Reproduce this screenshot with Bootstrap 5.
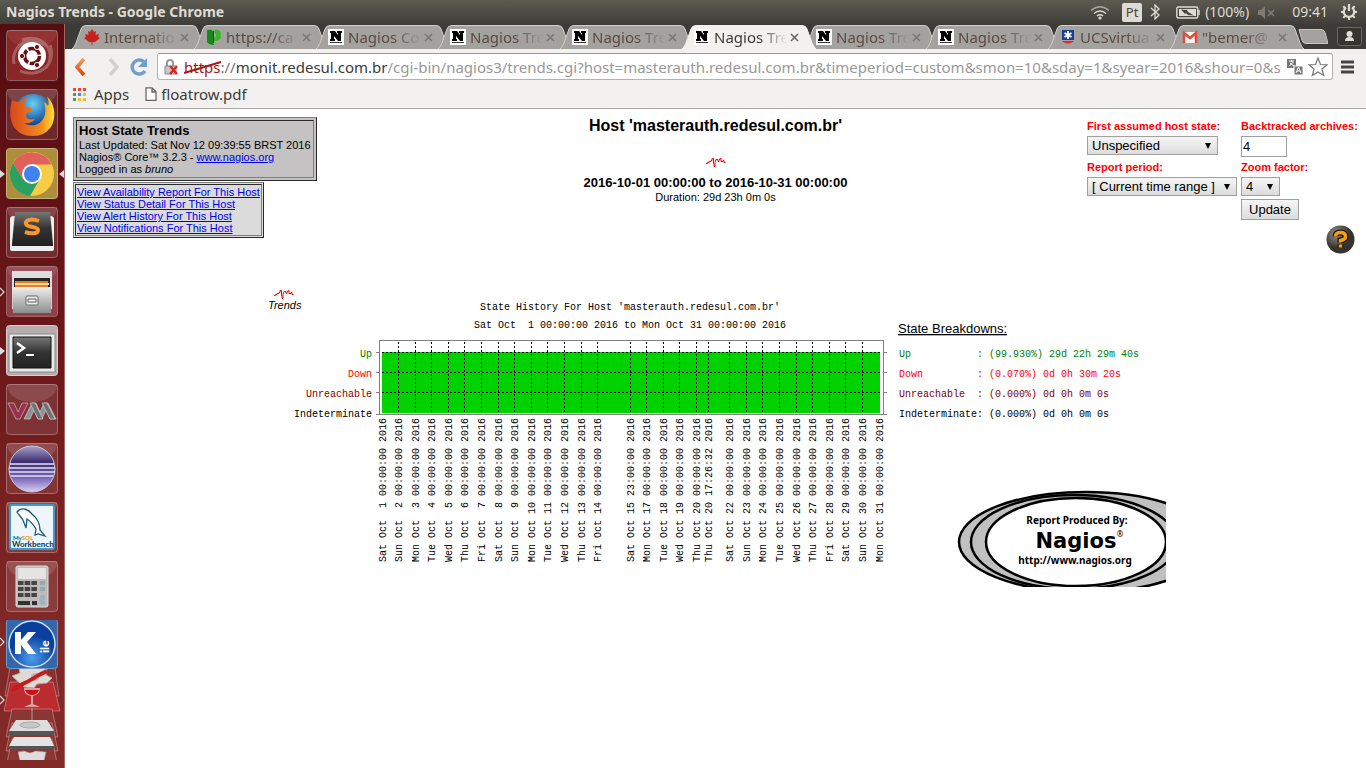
<!DOCTYPE html>
<html lang="en">
<head>
<meta charset="utf-8">
<meta name="viewport" content="width=device-width, initial-scale=1">
<title>Nagios Trends</title>
<link href="https://cdn.jsdelivr.net/npm/bootstrap@5.3.0/dist/css/bootstrap.min.css" rel="stylesheet">
<style>
  body { background: #fff; color: #000; font-family: "Noto Sans", sans-serif; font-size: 15px; line-height: 20px; }
  svg { display: block; flex: none; }
  .panel-bar { height: 24px; background: linear-gradient(#5c5a50, #3f3e39); color: #dfdbd2; font-size: 14px; }
  .panel-bar h1 { font-size: 14px; line-height: 24px; font-weight: 700; margin: 0 auto 0 6px; }
  .lang-box { background: #dfdbd2; color: #45443f; border-radius: 2px; font-size: 13px; line-height: 19px; width: 20px; text-align: center; }
  .launcher { width: 65px; padding-top: 6px; gap: 8px; background: linear-gradient(90deg, transparent 64px, #a5685f 64px), linear-gradient(#560d12, #6c171a 45%, #7f2826 80%, #822a28); overflow: hidden; flex: none; }
  .launcher a { display: block; }
  .tabstrip { height: 25px; background: #3c3b37; padding-left: 11px; }
  .tab-item { position: relative; flex: 0 1 122px; min-width: 0; height: 24px; margin-top: 1px; color: #5b4a42; padding-left: 8px; }
  .tab-item > .tab-shape { position: absolute; left: -5px; top: 0; width: calc(100% + 14px); height: 24px; fill: #a3a29f; stroke: #d0cfcc; }
  .tab-item.active { color: #3c3b37; z-index: 2; }
  .tab-item.active > .tab-shape { fill: #f2f1f0; stroke: #f2f1f0; }
  .tab-item > .tab-fav { position: relative; width: 16px; height: 16px; }
  .tab-item > a { position: relative; flex: 0 0 76px; margin-left: 4px; color: inherit; text-decoration: none; white-space: nowrap; -webkit-mask-image: linear-gradient(90deg, #000 60%, transparent 96%); mask-image: linear-gradient(90deg, #000 60%, transparent 96%); }
  .tab-close { position: relative; border: 0; background: none; padding: 0; color: #777; }
  .tab-item.active .tab-close { color: #666; }
  .toolbar { background: #f2f1f0; border-bottom: 1px solid #a9a8a7; height: 60px; color: #3c3b37; }
  .tool-btn { border: 0; background: none; padding: 0; }
  .omnibox { height: 27px; background: #fff; border: 1px solid #b3b2b0; border-top-color: #999; border-radius: 3px; min-width: 0; white-space: nowrap; }
  .omnibox input { border: 0; outline: 0; padding: 0; min-width: 0; color: #999; background: none; }
  .scheme { position: relative; color: #a4161a; }
  .scheme svg { position: absolute; left: 0; top: 3px; }
  .report { font-family: "Liberation Sans", Arial, sans-serif; font-size: 11px; line-height: 12px; padding: 8px; }
  .report a { color: #00e; text-decoration: underline; }
  .side-col { flex: 1 1 0; }
  .ridge-box { border: 1px solid; border-color: #808080 #2b2b2b #2b2b2b #808080; background: #c4c2c2; padding: 2px; }
  .ridge-box > div { border: 1px solid; border-color: #2b2b2b #808080 #808080 #2b2b2b; padding: 2px; }
  .box-title { font-size: 13px; line-height: 16px; font-weight: 700; margin: 0; }
  .link-box { background: #dbdbdb; padding: 1px; margin-top: 1px; }
  .link-box > div { padding: 1px; }
  .host-title { font-size: 16px; line-height: 18px; font-weight: 700; margin: 0; }
  .pulse-row { padding: 22px 0 8px; }
  .range-line { font-size: 13px; line-height: 16px; font-weight: 700; }
  .opt-grid { display: grid; grid-template-columns: 150px 117px; gap: 3px 4px; align-items: start; justify-items: start; padding-top: 2px; }
  .opt-grid label { color: #f00; font-weight: 700; line-height: 14px; }
  .opt-grid select, .opt-grid input, .opt-grid button { font-family: inherit; font-size: 13px; color: #000; border: 1px solid #a0a0a0; border-radius: 0; line-height: 15px; }
  .opt-grid select { appearance: none; height: 19px; padding: 1px 4px; background: url("data:image/svg+xml,%3Csvg xmlns='http://www.w3.org/2000/svg' width='8' height='7'%3E%3Cpath d='M1 0h6L4 6z'/%3E%3C/svg%3E") right 5px top 6px no-repeat, linear-gradient(#f6f6f6, #dcdcdc); }
  .opt-grid input { width: 46px; height: 21px; padding: 2px 1px; }
  .opt-grid button { height: 21px; padding: 1px 7px; background: linear-gradient(#f6f6f6, #dcdcdc); }
  .w-state { width: 131px; } .w-period { width: 150px; } .w-zoom { width: 39px; }
  .help-link { margin: 5px 3px 0 0; }
  .chart-wrap { padding: 33px 0 0 1px; }
  .plot-text { font-family: "Liberation Mono", monospace; font-size: 10px; }
</style>
</head>
<body class="d-flex flex-column min-vh-100">

<svg width="0" height="0" class="position-absolute" aria-hidden="true">
  <defs>
    <symbol id="pulse" viewBox="0 0 20 10"><path d="M0 6.500h1.500v-1H3v-1h2v-1h1v-2h1.500v5H8v3h1v-4l1-3h2v2h1v-1l1-2h1v3h2v-1h1v2h1.500" fill="none" stroke="#f00"/></symbol>
    <symbol id="fav-n" viewBox="0 0 16 16"><path fill="#fff" d="M0 0h16v16H0z"/><path d="M2 12V10h1V4H2V2h5l3 4V4H9V2h5v2h-1v8h-3L6 7v3h1v2z"/><path d="M2 13.500h12" stroke="#333"/></symbol>
    <symbol id="cross" viewBox="0 0 9 9"><path d="m1 1 7 7m0-7L1 8" stroke="currentColor" stroke-width="1.600"/></symbol>
    <symbol id="tile" viewBox="0 0 64 51"><rect x="6.500" y=".5" width="51" height="50" rx="3" fill="#fff" fill-opacity=".1" stroke="#fff" stroke-opacity=".3"/><ellipse cx="32" cy="2" rx="25" ry="16" fill="#fff" opacity=".13"/></symbol>
    <symbol id="run" viewBox="0 0 64 51"><path d="m0 22 5 4-5 4z" fill="#ddd"/></symbol>
    <symbol id="run-open" viewBox="0 0 64 51"><path d="m0 22 4 4-4 4" fill="none" stroke="#ddd" stroke-width="1.200"/></symbol>
    <linearGradient id="gSteel" x2="0" y2="1"><stop stop-color="#eee"/><stop offset="1" stop-color="#8e8e8e"/></linearGradient>
    <linearGradient id="gDark" x2="0" y2="1"><stop stop-color="#777"/><stop offset=".5" stop-color="#333"/><stop offset="1" stop-color="#222"/></linearGradient>
    <radialGradient id="gSea" cx=".5" cy=".25"><stop stop-color="#6cd0f2"/><stop offset="1" stop-color="#124a97"/></radialGradient>
    <linearGradient id="gFox" x2="1"><stop stop-color="#d8481c"/><stop offset=".7" stop-color="#f28a1e"/><stop offset="1" stop-color="#ffe23a"/></linearGradient>
    <linearGradient id="gEcl" x2="0" y2="1"><stop stop-color="#a9a2c8"/><stop offset=".35" stop-color="#3b2c6e"/><stop offset=".7" stop-color="#7a68b8"/><stop offset="1" stop-color="#d9d0ef"/></linearGradient>
    <radialGradient id="gKile" cx=".5" cy=".8"><stop stop-color="#4fa0ee"/><stop offset="1" stop-color="#0b3f9c"/></radialGradient>
    <radialGradient id="gHelp" cx=".35" cy=".3"><stop stop-color="#999488"/><stop offset="1" stop-color="#35332d"/></radialGradient>
    <linearGradient id="gBack" x2="0" y2="1"><stop stop-color="#f59a5c"/><stop offset="1" stop-color="#d9460b"/></linearGradient>
  </defs>
</svg>

<header class="panel-bar d-flex align-items-center">
  <h1>Nagios Trends - Google Chrome</h1>
  <div class="d-flex align-items-center">
    <svg width="20" height="15" viewBox="0 0 20 15" fill="none" stroke="#dfdbd2" stroke-width="1.600" class="me-2"><path d="M1 5.500Q10-2 19 5.500" opacity=".6"/><path d="M4 8.500q6-5 12 0M7 11q3-2.500 6 0"/><circle cx="10" cy="13" r=".8"/></svg>
    <span class="lang-box ms-1">Pt</span>
    <svg width="10" height="16" viewBox="0 0 10 16" fill="none" stroke="#dfdbd2" stroke-width="1.300" class="mx-2 ms-2 ps-0"><path d="m1 4 8 7-4 4V1l4 4-8 7"/></svg>
    <svg width="25" height="13" viewBox="0 0 25 13" class="ms-2"><rect x=".8" y="1" width="21" height="11" rx="1.500" fill="none" stroke="#dfdbd2" stroke-width="1.400"/><path d="M3 3h17v7H3z" fill="#dfdbd2"/><path d="M23 4v5" stroke="#dfdbd2" stroke-width="1.500"/><path d="m5 3.500 6 .5 1 2 6 3.500-6-.5-2-2-1 1z" fill="#45443f"/></svg>
    <span class="ms-1">(100%)</span>
    <svg width="19" height="13" viewBox="0 0 19 13" fill="#7d7b74" class="mx-2 ms-2"><path d="M1 4h3l4-4v13l-4-4H1z"/><path d="m11 4 6 6m0-6-6 6" stroke="#7d7b74" stroke-width="1.500"/></svg>
    <span class="ms-2 me-1">09:41</span>
    <svg width="18" height="18" viewBox="0 0 18 18" fill="none" stroke="#dfdbd2" class="mx-2"><path d="M6 4.500a5.200 5.200 0 1 0 6 0M9 1v7" stroke-width="2.200"/><path d="M1 9h3M14 9h3M9 14v3M3.300 3.300l2 2M14.700 3.300l-2 2M3.300 14.700l2-2M14.700 14.700l-2-2" stroke-width="2"/></svg>
  </div>
</header>

<div class="d-flex flex-grow-1">
  <nav class="launcher d-flex flex-column" aria-label="Launcher">
    <a href="#" aria-label="Dash"><svg width="64" height="51"><use href="#tile"/><rect x="7" y="1" width="50" height="49" rx="3" fill="#a92824" opacity=".5"/><g fill="none" stroke="#fff" opacity=".25" stroke-width="3"><path d="M14 34C10 12 36 2 50 20M50 15c7 20-12 34-30 26M22 10C42 2 58 22 46 38"/></g><circle cx="32" cy="26" r="14" fill="#fff"/><circle cx="32" cy="26" r="7.500" fill="none" stroke="#671114" stroke-width="3.500" stroke-dasharray="14 1.700"/><g fill="#671114" stroke="#fff"><circle cx="22" cy="26" r="2.600"/><circle cx="37" cy="17" r="2.600"/><circle cx="37" cy="35" r="2.600"/></g></svg></a>
    <a href="#" aria-label="Firefox"><svg width="64" height="51"><use href="#tile"/><circle cx="33" cy="25" r="20" fill="url(#gSea)"/><path d="M12 11c-5 18 0 36 21 36 16 0 23-13 21-26-1-7-4-11-7-13 2 4 2 7 1 9-1-2-2-3-4-4 2 7 2 12-1 17-4 7-13 8-19 4 5 1 9-1 11-4-5 1-9 0-9-4 1-4 5-2 6-6-2-2-5-2-8-3 0-3 1-6 3-8-4 0-6 2-8 4-3 0-6-1-7-2z" fill="url(#gFox)"/></svg></a>
    <a href="#" aria-label="Chrome"><svg width="64" height="51"><rect x="6.500" y=".5" width="51" height="50" rx="3" fill="#ad8e3d" stroke="#c7b176"/><use href="#run"/><path d="m64 22-5 4 5 4z" fill="#ddd"/><circle cx="32" cy="26" r="22" fill="#f9cc44"/><path d="M13 15a22 22 0 0 0 17 33l10-17-8-5-9 5z" fill="#2aa061"/><path d="M13 15A22 22 0 0 1 51.500 16.500H32L23 31z" fill="#e0605a"/><circle cx="32" cy="26" r="10" fill="#fff"/><circle cx="32" cy="26" r="8" fill="#3f83ee"/></svg></a>
    <a href="#" aria-label="Sublime Text"><svg width="64" height="51"><use href="#tile"/><path d="M10 12q0-3 4-3h36q4 0 4 3v30q0 2-2 2H12q-2 0-2-2z" fill="#eee"/><path d="M15 5h35l3 32H12z" fill="url(#gDark)"/><path d="M12 37h41v2H12z" fill="#222"/><path d="M39 14c-8-3-14-1-13 3s12 2 12 6-7 4-13 2" fill="none" stroke="#f8962c" stroke-width="4"/></svg></a>
    <a href="#" aria-label="Files"><svg width="64" height="51"><use href="#tile"/><rect x="7" y="1" width="50" height="49" rx="3" fill="#c8607c" opacity=".35"/><use href="#run-open"/><path d="M12 5h40v38H12z" fill="#ddd"/><path d="M14 12h36v11H14z" fill="#222"/><path d="M15 15h33v8H15z" fill="#e87a22"/><path d="M15 18h34" stroke="#fbd9a0" stroke-width="2"/><path d="M12 21h40l-1 26H13z" fill="url(#gSteel)"/><rect x="26" y="30" width="12" height="9" rx="1" fill="#eee" stroke="#666"/><path d="M28 33h8v3h-8z" fill="#fff" stroke="#555"/></svg></a>
    <a href="#" aria-label="Terminal"><svg width="64" height="51"><rect x="6.500" y=".5" width="51" height="50" rx="3" fill="#b8adae" stroke="#d5cdce"/><use href="#run"/><path d="M9 9h46v38H9z" fill="#e9e9e9" stroke="#888"/><path d="M13 12h38v31H13z" fill="url(#gDark)" stroke="#111"/><path d="m17 18 7 5-7 5" fill="none" stroke="#fff" stroke-width="2.500"/><path d="M26 30h8" stroke="#fff" stroke-width="2"/></svg></a>
    <a href="#" aria-label="Virtual Machine Manager"><svg width="64" height="51"><use href="#tile"/><g stroke="#ddd" stroke-width=".7" stroke-opacity=".8"><path d="M8 19h6l4 9 4-9h6l-8 16h-4z" fill="#99304f"/><path d="m24 35 8-16h4l4 9 4-9h4l8 16h-6l-4-9-4 9h-4l-4-9-4 9z" fill="#8f9294"/><path d="m30 19 8 16h5l-8-16zM42 19l8 16h5l-8-16z" fill="#6f7274"/></g></svg></a>
    <a href="#" aria-label="Eclipse"><svg width="64" height="51"><use href="#tile"/><circle cx="32" cy="26" r="23" fill="url(#gEcl)" stroke="#cfc6e6"/><path d="M10 21h44M9 25h46M9 29h46M11 33h42" stroke="#e4ddf5" stroke-width="1.500"/></svg></a>
    <a href="#" aria-label="MySQL Workbench"><svg width="64" height="51"><use href="#tile"/><rect x="10" y="3" width="44" height="44" rx="2" fill="#eef6fb" stroke="#3a9cd0" stroke-width="2"/><path d="M17 10c5-6 12-2 15 2 6 5 8 11 8 16l5 6-7-2-3 1 1-6c-3-5-6-8-9-10l-1 9-3-8c-2-3-4-5-6-8z" fill="#fff" stroke="#1c5b80" stroke-width="1.300"/><text x="13" y="38" font-family="Lato" font-size="6" font-weight="700" fill="#00617f">My<tspan fill="#e6942d">SQL</tspan></text><text x="12" y="45" font-family="Lato" font-size="8" font-weight="900" fill="#123f60">Workbench</text></svg></a>
    <a href="#" aria-label="Calculator"><svg width="64" height="51"><use href="#tile"/><rect x="16" y="5" width="32" height="41" rx="2" fill="#bdbab9" stroke="#ddd"/><path d="M18 7h28v11H18z" fill="#e5e4e2"/><path d="M18 22h19M18 28h19M18 34h19" stroke="#444" stroke-width="4" stroke-dasharray="5.500 1.200"/><path d="M18 42h12M32 42h5" stroke="#333" stroke-width="4"/><path d="M40 22h5M40 28h5M40 38h5" stroke="#93a9b0" stroke-width="4"/><path d="M40 34h5v10h-5z" fill="#9fb4bc"/></svg></a>
    <a href="#" aria-label="Kile and folded applications"><svg width="64" height="140">
      <g stroke="#fff" stroke-opacity=".3"><path d="M10 47h45l4 29H5z" fill="#8c302f"/><path d="M10 62h43l7 29H4z" fill="#bb2c31"/><path d="M12 89h40l6 28H6z" fill="#8c3634"/><path d="M12 103h40l6 28H6z" fill="#8c3634"/><path d="M12 119h40l6 28H6z" fill="#8c3634"/></g>
      <path d="m12 56 8-3-1-5h28l-1 7 6 3-5 5-10 1-3 4-10-1z" fill="#dedbd6" stroke="#aaa"/><circle cx="35" cy="57" r="4" fill="#bbb"/><path d="M12 71c5-6 16-8 25-15l10-5" fill="none" stroke="#c81c1c" stroke-width="4"/>
      <path d="M24 68h16c0 5-3 7-7 8v8l7 3H24l7-3v-8c-5-1-7-3-7-8z" fill="#d9a09f"/><path d="M25 70h14q-2 5-7 5t-7-5z" fill="#c80f16"/>
      <path d="M32 88v18" stroke="#ddd" opacity=".6"/><path d="M16 100h31l7 11H9z" fill="#ddd"/><ellipse cx="30" cy="105" rx="10" ry="3" fill="#c8c8c8" stroke="#aaa"/><path d="M9 111h45v4H9z" fill="#555"/><path d="M14 117h36l4 9H9z" fill="#e3e3e3"/><path d="M9 126h45v3H9z" fill="#555"/><path d="m18 132 6-1 6 2 6-2 10 1-2 9H20z" fill="#ddd" stroke="#999" stroke-dasharray="2 2"/>
      <rect x="6.500" y="-1.500" width="51" height="50" rx="3" fill="#3467a8" stroke="#6f9bce"/><path d="m0 18 4 4-4 4M0 76l4 4-4 4" fill="none" stroke="#ddd" stroke-width="1.200"/><circle cx="32" cy="24" r="23" fill="url(#gKile)" stroke="#c9dcf2" stroke-width="1.500"/><path d="M15 12h6v8l7-8h8l-9 10 9 12h-8l-7-9v9h-6z" fill="#fff"/><text transform="translate(49 33) rotate(-90)" font-family="Lato" font-size="12" font-weight="900" fill="#fff">ile</text>
    </svg></a>
  </nav>

  <div class="flex-grow-1 d-flex flex-column" style="min-width:0">
    <div class="tabstrip d-flex" id="tabstrip"></div>
    <div class="toolbar">
      <div class="d-flex align-items-center pt-1">
        <button class="tool-btn ms-2" aria-label="Back"><svg width="18" height="20" viewBox="0 0 18 20"><path d="m11 2-7 8 7 8" fill="none" stroke="url(#gBack)" stroke-width="3.500"/></svg></button>
        <button class="tool-btn ms-3" aria-label="Forward"><svg width="14" height="20" viewBox="0 0 14 20"><path d="m3 2 7 8-7 8" fill="none" stroke="#d2d0ce" stroke-width="3.500"/></svg></button>
        <button class="tool-btn ms-2" aria-label="Reload"><svg width="20" height="20" viewBox="0 0 20 20"><path d="M15 5a7 7 0 1 0 1 9" fill="none" stroke="#6f9fcf" stroke-width="3.500"/><path d="M18 1v9h-9z" fill="#6f9fcf"/></svg></button>
        <div class="omnibox d-flex align-items-center flex-grow-1 mx-2 px-1">
          <svg width="18" height="18" viewBox="0 0 18 18" class="me-1"><path d="M5 8V5q0-3 3-3t3 3v3" fill="none" stroke="#999" stroke-width="2"/><path d="M3 8h11v8H3z" fill="#c8c8c8" stroke="#888"/><path d="m8 8 7 8m0-8-7 8" stroke="#e0201b" stroke-width="2.200"/></svg>
          <label for="url" class="d-flex"><span class="scheme">https<svg width="38" height="14" viewBox="0 0 38 14"><path d="m0 13 37-11" stroke="#a4161a" stroke-width="2"/></svg></span><span class="text-secondary">://</span><span>monit.redesul.com.br</span></label>
          <input id="url" type="text" class="flex-grow-1" value="/cgi-bin/nagios3/trends.cgi?host=masterauth.redesul.com.br&amp;timeperiod=custom&amp;smon=10&amp;sday=1&amp;syear=2016&amp;shour=0&amp;s">
          <svg width="18" height="18" viewBox="0 0 18 18"><path d="M1 1h9v9H1z" fill="#777"/><path d="M3 3h5M5.500 2v2m-2 4 4-4M4 5l4 3" stroke="#fff"/><path d="M8 8h9v9H8z" fill="#777" stroke="#fff"/><path d="m10 15 2.500-6 2.500 6m-4-2h3" fill="none" stroke="#fff"/></svg>
          <svg width="20" height="20" viewBox="0 0 20 20" class="ms-1"><path d="m10 1 2.500 6.500 6.500.3-5 4.200 1.700 6.500L10 15l-5.700 3.500L6 12 1 7.800l6.500-.3z" fill="#fff" stroke="#777" stroke-width="1.200"/></svg>
        </div>
        <button class="tool-btn me-2 pe-1" aria-label="Menu"><svg width="13" height="14" viewBox="0 0 13 14"><path d="M0 2h13M0 7h13M0 12h13" stroke="#444" stroke-width="3"/></svg></button>
      </div>
      <div class="d-flex align-items-center ps-2 pt-1">
        <svg width="13" height="13" viewBox="0 0 13 13"><path d="M0 1.500h13" stroke="#e8453c" stroke-width="3" stroke-dasharray="3 2"/><path d="M0 6.500h3" stroke="#3aa757" stroke-width="3"/><path d="M5 6.500h3" stroke="#4688f1" stroke-width="3"/><path d="M10 6.500h3" stroke="#f9bb2d" stroke-width="3"/><path d="M0 11.500h3" stroke="#3aa757" stroke-width="3"/><path d="M5 11.500h8" stroke="#f9bb2d" stroke-width="3" stroke-dasharray="3 2"/></svg>
        <a href="#" class="text-reset text-decoration-none ms-2">Apps</a>
        <svg width="12" height="14" viewBox="0 0 12 14" class="ms-3"><path d="M1 .8h6l4 4v8.500H1zM7 1v4h4" fill="#fff" stroke="#666" stroke-width="1.300"/></svg>
        <a href="#" class="text-reset text-decoration-none ms-1">floatrow.pdf</a>
      </div>
    </div>

    <main class="report flex-grow-1">
      <div class="d-flex align-items-start">
        <div class="side-col d-flex flex-column align-items-start">
          <div class="ridge-box"><div>
            <h2 class="box-title">Host State Trends</h2>
            Last Updated: Sat Nov 12 09:39:55 BRST 2016<br>
            Nagios® Core™ 3.2.3 - <a href="#">www.nagios.org</a><br>
            Logged in as <i>bruno</i>
          </div></div>
          <div class="ridge-box link-box"><div>
            <a href="#">View Availability Report For This Host</a><br>
            <a href="#">View Status Detail For This Host</a><br>
            <a href="#">View Alert History For This Host</a><br>
            <a href="#">View Notifications For This Host</a>
          </div></div>
        </div>
        <div class="text-center">
          <h2 class="host-title">Host 'masterauth.redesul.com.br'</h2>
          <div class="pulse-row d-flex justify-content-center"><svg width="20" height="10"><use href="#pulse"/></svg></div>
          <div class="range-line">2016-10-01 00:00:00 to 2016-10-31 00:00:00</div>
          <div>Duration: 29d 23h 0m 0s</div>
        </div>
        <div class="side-col d-flex flex-column align-items-end">
          <form class="opt-grid" onsubmit="return false">
            <label for="state">First assumed host state:</label>
            <label for="arch">Backtracked archives:</label>
            <select id="state" class="w-state"><option>Unspecified</option></select>
            <input id="arch" type="text" value="4">
            <label for="period">Report period:</label>
            <label for="zoomf">Zoom factor:</label>
            <select id="period" class="w-period"><option>[ Current time range ]</option></select>
            <select id="zoomf" class="w-zoom"><option>4</option></select>
            <span></span>
            <button type="submit">Update</button>
          </form>
          <a href="#" class="help-link" aria-label="Help"><svg width="29" height="29" viewBox="0 0 29 29"><circle cx="14.500" cy="14.500" r="14" fill="url(#gHelp)"/><path d="M9.500 11.500q0-4 5-4 5 0 5 4 0 3-5 4v2m0 2v3" fill="none" stroke="#111" stroke-width="6"/><path d="M9.500 11.500q0-4 5-4 5 0 5 4 0 3-5 4v2m0 2v3" fill="none" stroke="#fa9d0a" stroke-width="3.500"/></svg></a>
        </div>
      </div>

      <div class="chart-wrap d-flex justify-content-center">
        <svg id="trend" width="900" height="300" viewBox="0 0 900 300" role="img" aria-label="State history">
          <svg x="8" y="2" width="20" height="10"><use href="#pulse"/></svg>
          <text x="2" y="22" font-size="11" font-style="italic">Trends</text>
          <g class="plot-text">
            <text x="214" y="23">State History For Host 'masterauth.redesul.com.br'</text>
            <text x="208" y="41">Sat Oct&nbsp; 1 00:00:00 2016 to Mon Oct 31 00:00:00 2016</text>
            <g text-anchor="end">
              <text x="106" y="70" fill="#008000">Up</text>
              <text x="106" y="90" fill="#f00">Down</text>
              <text x="106" y="110" fill="#800000">Unreachable</text>
              <text x="106" y="130">Indeterminate</text>
            </g>
            <g fill="#008000"><text x="633" y="70">Up</text><text x="711" y="70">: (99.930%) 29d 22h 29m 40s</text></g>
            <g fill="#f00"><text x="633" y="90">Down</text><text x="711" y="90">: (0.070%) 0d 0h 30m 20s</text></g>
            <g fill="#800000"><text x="633" y="110">Unreachable</text><text x="711" y="110">: (0.000%) 0d 0h 0m 0s</text></g>
            <g><text x="633" y="130">Indeterminate</text><text x="711" y="130">: (0.000%) 0d 0h 0m 0s</text></g>
          </g>
          <text x="632" y="46" font-size="13" text-decoration="underline">State Breakdowns:</text>
          <g shape-rendering="crispEdges">
            <path d="M116 65h498v61H116z" fill="#00d200"/>
            <path d="M110 65.500h4M110 85.500h4M110 105.500h4M110 127.500h511M617 65.500h4M617 85.500h4M617 105.500h4M113.500 127V53.500h504V127" fill="none" stroke="#808080"/>
            <path id="gridlines" d="M116 65.500h498M116 85.500h498M116 105.500h498" fill="none" stroke="#000" stroke-dasharray="2 2"/>
          </g>
          <g id="ticks" class="plot-text"></g>
          <g stroke="#000" stroke-width="2.500">
            <ellipse cx="820" cy="255" rx="127" ry="50" fill="#c0c0c0"/>
            <ellipse cx="808" cy="255" rx="103" ry="47" fill="#c0c0c0"/>
            <ellipse cx="810" cy="255" rx="90" ry="44" fill="#fff"/>
          </g>
          <g text-anchor="middle" font-family="Noto Sans, sans-serif" font-weight="700">
            <text x="811" y="237" font-size="10">Report Produced By:</text>
            <text x="810" y="261" font-size="21" font-family="DejaVu Sans, sans-serif">Nagios</text>
            <text x="854" y="250" font-size="8" font-weight="400">®</text>
            <text x="809" y="277" font-size="10">http://www.nagios.org</text>
          </g>
        </svg>
      </div>
    </main>
  </div>
</div>

<script src="https://cdn.jsdelivr.net/npm/bootstrap@5.3.0/dist/js/bootstrap.bundle.min.js"></script>
<script>
  const favs = {
    n: '<use href="#fav-n"/>',
    leaf: '<path d="m8 0 2 3 2-1-.500 4L15 5l-1 3 2 1-5 4H8.500v3h-1v-3H5L0 9l2-1-1-3 3.500 1L4 2l2 1z" fill="#c8201e"/>',
    green: '<path d="M1 1q5-1 6 1v11l1 3q-5 0-7-3z" fill="#178a1c"/><path d="M8 2q2-2 4-1 3 1 3 5 0 6-6 6H8V9q2 0 2-3z" fill="#38b52c"/><path d="M7.500 2v12" stroke="#0c5c10"/>',
    ucs: '<path d="M2 1h12v10H2z" fill="#1c3f94"/><path d="M2 12h12q-6 5-12 0z" fill="#e02828"/><path d="M8 2v8M4.500 4l7 4m0-4-7 4" stroke="#fff" stroke-width="1.800"/>',
    mail: '<path d="M1 3h14v11H1z" fill="#f4f4f4"/><path d="M2 14V4l6 5 6-5v10" fill="none" stroke="#dd4b39" stroke-width="2.500"/>'
  };
  const tabs = [['leaf', 'Internatio'], ['green', 'https://ca'], ['n', 'Nagios Co'], ['n', 'Nagios Tre'], ['n', 'Nagios Tre'], ['n', 'Nagios Tre', 1], ['n', 'Nagios Tre'], ['n', 'Nagios Tre'], ['ucs', 'UCSvirtua'], ['mail', '"bemer@']];
  document.getElementById('tabstrip').innerHTML = tabs.map(t =>
    `<div class="tab-item d-flex align-items-center${t[2] ? ' active' : ''}">
      <svg class="tab-shape" viewBox="0 0 136 24" preserveAspectRatio="none"><path d="M0 25Q3 23 5 18L10 4Q11 .500 15 .500H121Q125 .500 126 4l5 14q2 5 5 7"/></svg>
      <svg class="tab-fav" viewBox="0 0 16 16">${favs[t[0]]}</svg><a href="#">${t[1]}</a>
      <button class="tab-close" aria-label="Close tab"><svg width="9" height="9"><use href="#cross"/></svg></button></div>`).join('') +
    `<button class="tool-btn" aria-label="New tab"><svg width="32" height="15" viewBox="-2 0 32 15"><path d="M1 .500h22q3 0 4 3l3 11H8q-3 0-4-3z" fill="#a3a29f" stroke="#c5c4c1"/></svg></button>
     <button class="tool-btn ms-auto me-1" aria-label="Profile"><svg width="25" height="20" viewBox="0 0 25 20"><path d="M.500.500h24v15q0 3-3 3h-18q-3 0-3-3z" fill="#35342f" stroke="#696862"/><circle cx="12.500" cy="7" r="3" fill="#ddd"/><path d="M8 14q0-4 4.500-4t4.500 4z" fill="#ddd"/></svg></button>`;

  // x position of each event on the time axis, with its label
  const z = ' 00:00:00';
  const events = [[116, 'Sat Oct  1' + z], [132, 'Sun Oct  2' + z], [149, 'Mon Oct  3' + z], [165, 'Tue Oct  4' + z], [182, 'Wed Oct  5' + z], [198, 'Thu Oct  6' + z], [215, 'Fri Oct  7' + z], [232, 'Sat Oct  8' + z], [248, 'Sun Oct  9' + z], [265, 'Mon Oct 10' + z], [281, 'Tue Oct 11' + z], [298, 'Wed Oct 12' + z], [315, 'Thu Oct 13' + z], [331, 'Fri Oct 14' + z], [364, 'Sat Oct 15 23:00:00'], [380, 'Mon Oct 17' + z], [397, 'Tue Oct 18' + z], [413, 'Wed Oct 19' + z], [430, 'Thu Oct 20' + z], [442, 'Thu Oct 20 17:26:32'], [463, 'Sat Oct 22' + z], [480, 'Sun Oct 23' + z], [496, 'Mon Oct 24' + z], [513, 'Tue Oct 25' + z], [530, 'Wed Oct 26' + z], [546, 'Thu Oct 27' + z], [563, 'Fri Oct 28' + z], [579, 'Sat Oct 29' + z], [596, 'Sun Oct 30' + z], [613, 'Mon Oct 31' + z]];
  document.getElementById('ticks').innerHTML = events.map(e => `<text transform="translate(${e[0] + 4} 275) rotate(-90)">${e[1].replace('  ', '\u00a0 ')} 2016</text>`).join('');
  const grid = document.getElementById('gridlines');
  grid.setAttribute('d', grid.getAttribute('d') + events.slice(1, -1).map(e => `M${e[0]}.5 55v71`).join(''));
</script>
</body>
</html>
